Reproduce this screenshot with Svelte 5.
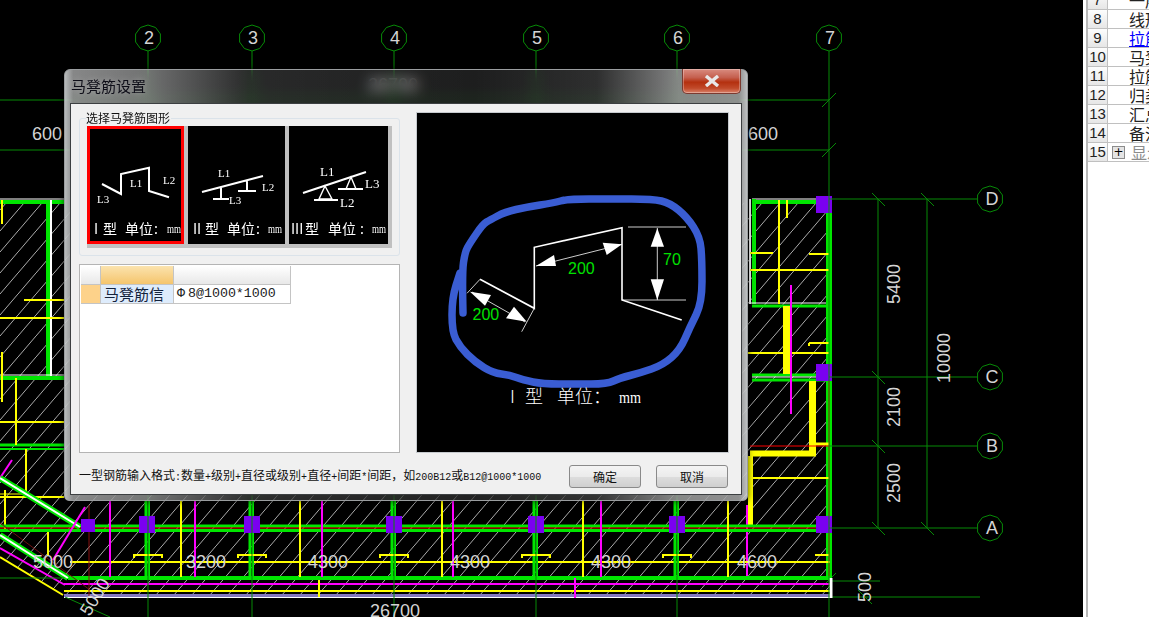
<script lang="ts">
    const G = "#00e600";
    const Y = "#ffff00";
    const M = "#ff00ff";
    const W = "#ffffff";
    const R = "#ff0000";
    const AXIS = "#078a07";

    // x1, y1, x2, y2, colour, width
    const walls: [number, number, number, number, string, number][] = [
        // top wall, left and right rooms
        [0, 199, 64, 199, W, 1], [0, 202, 64, 202, G, 4],
        [752, 199, 832, 199, W, 1], [752, 202, 830, 202, G, 4],
        [754, 199, 754, 304, G, 4], [750, 199, 750, 304, W, 2],
        [48, 200, 48, 376, G, 4], [51, 200, 51, 376, W, 2],
        [0, 375, 64, 375, W, 1], [0, 378, 64, 378, G, 4],
        [0, 445, 64, 445, G, 3], [0, 449, 64, 449, G, 2],
        [750, 303, 829, 303, W, 1], [752, 306, 829, 306, G, 3],
        [752, 375, 826, 375, G, 3], [752, 377, 829, 377, W, 1], [752, 380, 826, 380, G, 3],
        [827.5, 200, 827.5, 578, G, 3], [830.5, 200, 830.5, 578, G, 3], [829, 376, 829, 578, R, 1],
        // yellow inside the rooms
        [779, 200, 779, 304, Y, 2], [750, 270, 829, 270, Y, 2],
        [750, 253, 773, 253, Y, 2], [809, 254, 829, 254, Y, 2],
        [787, 200, 787, 218, Y, 2], [748, 353, 829, 353, Y, 2],
        [809, 343, 829, 343, Y, 2], [809, 343, 809, 346, Y, 2],
        [786.5, 306, 786.5, 374, Y, 7], [812.5, 381, 812.5, 451, Y, 7],
        [750, 453.5, 816, 453.5, Y, 6], [750.5, 456, 750.5, 525, Y, 5],
        [809, 444, 829, 444, Y, 3], [753, 478, 829, 478, Y, 2],
        [791, 285, 791, 414, M, 2], [750, 446, 829, 446, R, 1],
        [815, 555, 829, 555, Y, 2], [747, 505, 747, 577, M, 2],
        // left side
        [2, 200, 2, 224, Y, 2], [2, 352, 2, 402, Y, 2],
        [0, 318, 64, 318, Y, 2], [24, 300, 64, 300, Y, 2],
        [0, 422, 64, 422, Y, 2], [16, 378, 16, 445, Y, 2],
        [26, 449, 26, 495, Y, 2], [0, 494, 26, 494, Y, 1], [0, 497, 64, 497, Y, 2],
        [5, 490, 5, 530, Y, 2], [48, 530, 48, 556, Y, 2],
        [0, 478, 12, 460, M, 2],
        // bottom band
        [0, 526, 830, 526, G, 3], [0, 530.5, 830, 530.5, G, 3], [0, 528, 830, 528, R, 1],
        [68, 578, 830, 578, G, 4], [70, 562, 830, 562, Y, 2],
        [64, 584, 832, 584, M, 2], [64, 591, 832, 591, Y, 2],
        [64, 595.5, 832, 595.5, "#8478c0", 3], [64, 597.5, 832, 597.5, W, 1],
        [319, 580, 319, 597, Y, 2], [575, 578, 575, 598, M, 2],
        [831, 578, 831, 598, W, 3],
        // diagonal wing
        [0, 478, 80, 527, G, 6], [0, 478, 80, 527, W, 2],
        [0, 535, 68, 578, G, 6], [0, 535, 68, 578, W, 2],
        [0, 548, 65, 585, M, 2], [0, 557, 63, 595, Y, 2],
        [85, 507, 53, 560, M, 2], [89, 505, 89, 597, "#8a1010", 1],
        [0, 523, 90, 590, "#701010", 1], [65, 597, 110, 617, AXIS, 1], [0, 578, 64, 578, AXIS, 1]
    ];

    const bayXs = [148, 252, 394, 536, 677];
    const yellowXs = [181, 300, 442, 583, 728];
    const magentaXs = [110, 195, 322, 453, 601];

    const vAxes = [
        { x: 148, label: "2" }, { x: 252, label: "3" }, { x: 394, label: "4" },
        { x: 536, label: "5" }, { x: 677, label: "6" }, { x: 829, label: "7" }
    ];
    const hAxes = [
        { y: 199, label: "D" }, { y: 377, label: "C" }, { y: 446, label: "B" }, { y: 528, label: "A" }
    ];

    const columns = [
        [816, 196], [816, 364], [816, 516], [139, 516], [244, 516], [386, 516], [528, 516], [669, 516]
    ];

    const flatDims = [
        { x: 206, y: 568, t: "3200" }, { x: 328, y: 568, t: "4300" }, { x: 470, y: 568, t: "4300" },
        { x: 611, y: 568, t: "4300" }, { x: 757, y: 568, t: "4600" }, { x: 53, y: 568, t: "5000" },
        { x: 47, y: 140, t: "600" }, { x: 763, y: 140, t: "600" }, { x: 395, y: 617, t: "26700" },
        { x: 393, y: 91, t: "26700" }
    ];
    const sideDims = [
        { x: 900, y: 284, t: "5400" }, { x: 900, y: 407, t: "2100" }, { x: 900, y: 483, t: "2500" },
        { x: 950, y: 358, t: "10000" }, { x: 871, y: 587, t: "500" }
    ];

    function bubble(cx: number, cy: number) {
        const pts = [];
        for (let i = 0; i < 10; i++) {
            const a = (Math.PI / 5) * i;
            pts.push(`${(cx + 13 * Math.sin(a)).toFixed(1)},${(cy - 13 * Math.cos(a)).toFixed(1)}`);
        }
        return pts.join(" ");
    }

    const blobPts = [
        [463, 313], [462, 273], [465, 252], [470, 243], [483, 224], [490, 220], [505, 212], [527, 207], [553, 203],
        [568, 199], [610, 199], [653, 199], [670, 203], [687, 217], [700, 237], [702, 260], [702, 303],
        [690, 327], [680, 350], [663, 365], [640, 373], [620, 378], [607, 384], [575, 384], [543, 384],
        [523, 380], [510, 375], [493, 373], [475, 362], [460, 347], [452, 332], [452, 298], [460, 273]
    ];

    // rounded pen stroke: curve through the midpoints of the sampled points
    function penPath(pts: number[][]) {
        let d = `M${pts[0][0]} ${pts[0][1]}`;
        for (let i = 1; i < pts.length - 1; i++) {
            const mx = (pts[i][0] + pts[i + 1][0]) / 2;
            const my = (pts[i][1] + pts[i + 1][1]) / 2;
            d += ` Q${pts[i][0]} ${pts[i][1]} ${mx} ${my}`;
        }
        const last = pts[pts.length - 1];
        return `${d} L${last[0]} ${last[1]}`;
    }
    const blob = penPath(blobPts);

    const footer = "一型钢筋输入格式:数量+级别+直径或级别+直径+间距*间距，如200B12或B12@1000*1000";
    const footerParts = footer.split(/([\x00-\x7f]+)/).filter(Boolean);
    const isAscii = (s: string) => /^[\x00-\x7f]+$/.test(s);

    const sideRows = [
        { n: 7, t: "一层" }, { n: 8, t: "线形" }, { n: 9, t: "拉筋", link: true }, { n: 10, t: "马凳筋" },
        { n: 11, t: "拉筋" }, { n: 12, t: "归类" }, { n: 13, t: "汇总" }, { n: 14, t: "备注" },
        { n: 15, t: "显示", tree: true }
    ];
</script>

<div class="screen">
    <svg class="cad" viewBox="0 0 1083 617" width="1083" height="617">
        <defs>
            <pattern id="hatch" patternUnits="userSpaceOnUse" width="18" height="21">
                <path d="M-1 22.2 L19 -1.2" stroke="#bdbdbd" stroke-width="0.9" />
            </pattern>
        </defs>
        <polygon points="0,203 832,203 832,597 65,597 0,555" fill="url(#hatch)" />

        <line x1="0" y1="100" x2="829" y2="100" stroke={AXIS} />
        <line x1="0" y1="150" x2="829" y2="150" stroke={AXIS} />
        <line x1="878" y1="199" x2="878" y2="528" stroke={AXIS} />
        <line x1="927" y1="199" x2="927" y2="528" stroke={AXIS} />
        <line x1="829" y1="581" x2="880" y2="581" stroke={AXIS} />
        <line x1="829" y1="597" x2="980" y2="597" stroke={AXIS} />
        <path
            d="M822 107 L836 93 M822 157 L836 143 M872 193 L885 206 M921 193 L934 206 M872 371 L885 384 M872 440 L885 453 M872 522 L885 535 M921 522 L934 535 M822 587 L836 573 M858 590 L872 604"
            stroke={AXIS}
            fill="none"
        />

        {#each walls as [x1, y1, x2, y2, c, w]}
            <line {x1} {y1} {x2} {y2} stroke={c} stroke-width={w} />
        {/each}

        {#each bayXs as x}
            <line x1={x - 2} y1="501" x2={x - 2} y2="577" stroke={G} stroke-width="3" />
            <line x1={x + 1} y1="501" x2={x + 1} y2="577" stroke={G} stroke-width="2" />
            <path d="M{x - 14} 558 V555 H{x + 14} V558" stroke={Y} stroke-width="2" fill="none" />
        {/each}
        {#each yellowXs as x}
            <line x1={x} y1="501" x2={x} y2="577" stroke={Y} stroke-width="2" />
        {/each}
        {#each magentaXs as x}
            <line x1={x} y1="501" x2={x} y2="577" stroke={M} stroke-width="2" />
        {/each}

        {#each columns as [x, y]}
            <rect {x} {y} width="16" height="17" fill="#7a00f0" />
        {/each}
        <rect x="81" y="519" width="14" height="13" fill="#7a00f0" />

        {#each vAxes as a}
            <line x1={a.x} y1="51" x2={a.x} y2="617" stroke={AXIS} />
            <polygon points={bubble(a.x, 38)} fill="#000" stroke={AXIS} />
            <text class="dim" x={a.x + 1} y="44" text-anchor="middle">{a.label}</text>
        {/each}
        {#each hAxes as a}
            <line x1="829" y1={a.y} x2="977" y2={a.y} stroke={AXIS} />
            <polygon points={bubble(990, a.y)} fill="#000" stroke={AXIS} />
            <text class="dim" x="992" y={a.y + 6} text-anchor="middle">{a.label}</text>
        {/each}

        {#each flatDims as d}
            <text class="dim" x={d.x} y={d.y} text-anchor="middle">{d.t}</text>
        {/each}
        {#each sideDims as d}
            <text class="dim" text-anchor="middle" transform="translate({d.x} {d.y}) rotate(-90)">{d.t}</text>
        {/each}
        <text class="dim" text-anchor="middle" transform="translate(100 600) rotate(-58)">5000</text>
    </svg>

    <aside class="side">
        <div class="side-table">
            {#each sideRows as row}
                <div class="side-row">
                    <span class="side-num">{row.n}</span>
                    <span class="side-cell" class:link={row.link} class:muted={row.tree}>
                        {#if row.tree}<i class="plus">+</i>{/if}{row.t}
                    </span>
                </div>
            {/each}
        </div>
    </aside>

    <section class="dialog">
        <h1 class="title">马凳筋设置</h1>
        <button class="close" aria-label="关闭">
            <svg viewBox="0 0 16 12" width="16" height="12">
                <path d="M2 1 L14 11 M14 1 L2 11" stroke="#e8e8e8" stroke-width="3.4" fill="none" />
            </svg>
        </button>

        <div class="client">
            <div class="main">
                <div class="left">
                    <fieldset class="group">
                        <span class="group-label">选择马凳筋图形</span>
                        <div class="strip">
                            <svg class="thumb selected" viewBox="87 126 97 118" width="97" height="118">
                                <path class="rebar" d="M102 184 L121 194 V174 L149 167.7 V191 L169 197.3" />
                                <text class="tag" x="130" y="187">L1</text>
                                <text class="tag" x="163" y="184">L2</text>
                                <text class="tag" x="97" y="203">L3</text>
                                <text class="cap" x="94" y="234">I</text>
                                <text class="cap" x="103" y="234">型</text>
                                <text class="cap" x="125" y="234">单位</text>
                                <text class="cap" x="154" y="234">:</text>
                                <text class="cap-mm" x="167" y="233" textLength="14" lengthAdjust="spacingAndGlyphs">mm</text>
                            </svg>
                            <svg class="thumb" viewBox="188 126 97 118" width="97" height="118">
                                <path class="rebar" d="M202 192 L263 176 M221 187 V199 M213 199 H229 M247 180 V191 M238 191 H256" />
                                <text class="tag" x="218" y="177">L1</text>
                                <text class="tag" x="262" y="191">L2</text>
                                <text class="tag" x="229" y="204">L3</text>
                                <text class="cap" x="193" y="234">II</text>
                                <text class="cap" x="205" y="234">型</text>
                                <text class="cap" x="227" y="234">单位</text>
                                <text class="cap" x="256" y="234">:</text>
                                <text class="cap-mm" x="268" y="233" textLength="14" lengthAdjust="spacingAndGlyphs">mm</text>
                            </svg>
                            <svg class="thumb" viewBox="289 126 99 118" width="99" height="118">
                                <path class="rebar" d="M303 193 L366 172 M314 200 H338 M338 189 H363" />
                                <path class="rebar thin" d="M325 186 L319 199 H332 Z M351 177 L346 189 H356 Z" />
                                <text class="tag big" x="320" y="176">L1</text>
                                <text class="tag big" x="340" y="207">L2</text>
                                <text class="tag big" x="365" y="188">L3</text>
                                <text class="cap" x="291" y="234">III</text>
                                <text class="cap" x="305" y="234">型</text>
                                <text class="cap" x="328" y="234">单位</text>
                                <text class="cap" x="360" y="234">:</text>
                                <text class="cap-mm" x="372" y="233" textLength="14" lengthAdjust="spacingAndGlyphs">mm</text>
                            </svg>
                        </div>
                    </fieldset>

                    <div class="sheet">
                        <div class="sheet-grid">
                            <span class="head"></span>
                            <span class="head active"></span>
                            <span class="head"></span>
                            <span class="row-head"></span>
                            <span class="cell name">马凳筋信</span>
                            <span class="cell value"><b class="bar-mark">Φ</b>8@1000*1000</span>
                        </div>
                    </div>
                </div>

                <svg class="preview" viewBox="417 113 311 339" width="311" height="339">
                    <path class="big-line" d="M480 279.3 L534.3 308.3 V247.3 L622 227.7 V300 L681.7 320" />
                    <path
                        class="hair"
                        d="M467 293.3 L480 279.3 M534.3 308.3 L521.7 331.7 M472 292 L525 322 M536 266 L622 244.3 M657.3 228 V300 M628 227 H686 M622 300 H686"
                    />
                    <polygon class="head-w" points="470,291.7 491,295 485,305.7" />
                    <polygon class="head-w" points="526.7,321.7 514,306.7 506,318.3" />
                    <polygon class="head-w" points="536,266 554,255 556,266" />
                    <polygon class="head-w" points="622,244.3 602.7,242.7 606.7,255" />
                    <polygon class="head-w" points="657.3,228.3 650.7,246.7 664,246.7" />
                    <polygon class="head-w" points="657.3,300 650.7,279.3 664,279.3" />
                    <text class="green" x="472.5" y="320">200</text>
                    <text class="green" x="568" y="274">200</text>
                    <text class="green" x="663" y="265">70</text>
                    <path class="marker" d={blob} />
                    <text class="pre-cap" x="510" y="403">I</text>
                    <text class="pre-cap" x="525" y="403">型</text>
                    <text class="pre-cap" x="557" y="403">单位：</text>
                    <text class="pre-mm" x="619" y="403" textLength="22" lengthAdjust="spacingAndGlyphs">mm</text>
                </svg>
            </div>

            <footer class="foot">
                <p class="hint">
                    {#each footerParts as part}<span class:ascii={isAscii(part)}>{part}</span>{/each}
                </p>
                <button class="btn">确定</button>
                <button class="btn">取消</button>
            </footer>
        </div>
    </section>
</div>

<style>
    :global(body) {
        background: #000;
    }

    .screen {
        position: relative;
        display: flex;
        width: 1149px;
        height: 617px;
        overflow: hidden;
        background: #000;
        font-family: "Noto Sans CJK SC", sans-serif;
    }

    .cad {
        display: block;
        flex: none;
    }

    .dim {
        font-family: "Liberation Sans", sans-serif;
        font-size: 18px;
        fill: #d4d4d4;
    }

    .side {
        flex: 1;
        min-width: 0;
        background: #fff;
        padding-left: 3px;
        overflow: hidden;
    }

    .side-table {
        border-left: 2px solid #b8b8b8;
        height: calc(100% + 9px);
        margin-top: -9px;
        white-space: nowrap;
    }

    .side-row {
        display: flex;
        height: 19px;
        box-sizing: border-box;
        border-bottom: 1px solid #c0c0c0;
        align-items: center;
        overflow: hidden;
    }

    .side-num {
        flex: none;
        width: 20px;
        height: 18px;
        border-right: 1px solid #c0c0c0;
        box-sizing: border-box;
        background: linear-gradient(#fdfdfd, #e6e6e6);
        font-family: "Liberation Sans", sans-serif;
        font-size: 15px;
        line-height: 18px;
        text-align: center;
        color: #222;
    }

    .side-cell {
        display: flex;
        align-items: center;
        flex: none;
        margin-left: 21px;
        font-size: 16px;
        line-height: 18px;
        color: #222;
    }

    .side-row:last-child .side-cell {
        margin-left: 4px;
    }

    .side-cell.link {
        color: #0000ff;
        text-decoration: underline;
    }

    .side-cell.muted {
        color: #8c8c8c;
    }

    .plus {
        width: 11px;
        height: 11px;
        margin-right: 6px;
        border: 1px solid #8c8c8c;
        background: #e4e4e4;
        font: 12px/10px "DejaVu Sans", sans-serif;
        text-align: center;
        color: #000;
    }

    .dialog {
        position: absolute;
        left: 64px;
        top: 69px;
        width: 684px;
        height: 432px;
        box-sizing: border-box;
        padding: 33px 5px 5px;
        border-radius: 6px 6px 5px 5px;
        border: 1px solid #9a9d9f;
        backdrop-filter: blur(7px);
        background:
            linear-gradient(
                90deg,
                rgba(225, 230, 232, 0.58) 0,
                rgba(190, 195, 197, 0.14) 1.2%,
                rgba(160, 165, 167, 0.1) 98.8%,
                rgba(225, 230, 232, 0.58) 100%
            ),
            linear-gradient(
                90deg,
                rgba(255, 255, 255, 0.5) 0,
                rgba(255, 255, 255, 0.4) 12%,
                rgba(255, 255, 255, 0.08) 27%,
                rgba(255, 255, 255, 0.04) 60%,
                rgba(255, 255, 255, 0.12) 78%,
                rgba(255, 255, 255, 0.5) 90%,
                rgba(255, 255, 255, 0.55) 100%
            );
        box-shadow: 0 0 6px rgba(0, 0, 0, 0.7);
    }

    .title {
        position: absolute;
        left: 6px;
        top: 6px;
        margin: 0;
        font-size: 15px;
        font-weight: 400;
        line-height: 20px;
        color: #0e0e18;
        text-shadow: 0 0 6px rgba(255, 255, 255, 0.35);
    }

    .close {
        position: absolute;
        top: -1px;
        right: 6px;
        width: 59px;
        height: 25px;
        padding: 0;
        display: flex;
        align-items: center;
        justify-content: center;
        border: 1px solid #7b3a30;
        border-top: 0;
        border-radius: 0 0 5px 5px;
        background: linear-gradient(#d98c80 0, #c5604f 35%, #b4300f 55%, #c14a2a 80%, #d9816a 100%);
        box-shadow: inset 0 0 0 1px rgba(255, 255, 255, 0.3);
    }

    .client {
        height: 100%;
        box-sizing: border-box;
        border: 1px solid #3c3f41;
        background: #f0f0f0;
        display: flex;
        flex-direction: column;
    }

    .main {
        display: flex;
        gap: 17px;
        padding: 9px 0 0 8px;
    }

    .left {
        flex: none;
        width: 321px;
        padding-top: 5px;
        display: flex;
        flex-direction: column;
        gap: 8px;
    }

    .group {
        position: relative;
        margin: 0;
        padding: 7px 7px 8px 7px;
        height: 138px;
        box-sizing: border-box;
        border: 1px solid #dbe3ea;
        border-radius: 3px;
        min-width: 0;
    }

    .group-label {
        position: absolute;
        left: 6px;
        top: -8px;
        padding-right: 1px;
        background: #f0f0f0;
        font-size: 12px;
        line-height: 14px;
        color: #111;
    }

    .strip {
        display: flex;
        gap: 4px;
        width: 305px;
        height: 122px;
        box-sizing: border-box;
        padding-bottom: 4px;
        background: #c0c0c0;
    }

    .thumb {
        display: block;
        flex: none;
        background: #000;
    }

    .thumb.selected {
        outline: 3px solid #ff0000;
        outline-offset: -3px;
    }

    .rebar {
        stroke: #fff;
        stroke-width: 2;
        fill: none;
    }

    .rebar.thin {
        stroke-width: 1.4;
    }

    .tag {
        font-family: "Liberation Serif", serif;
        font-size: 11px;
        fill: #fff;
    }

    .tag.big {
        font-size: 13px;
    }

    .cap {
        font-family: "Noto Sans CJK SC", sans-serif;
        font-size: 14px;
        font-weight: 400;
        fill: #fff;
    }

    .cap-mm {
        font-family: "Liberation Serif", serif;
        font-size: 12px;
        fill: #fff;
    }

    .sheet {
        height: 189px;
        box-sizing: border-box;
        padding: 1px;
        border: 1px solid #b4b4b4;
        background: #fff;
    }

    .sheet-grid {
        display: grid;
        grid-template-columns: 20px 73px 117px;
        grid-template-rows: 19px 19px;
        width: 210px;
    }

    .sheet-grid > span {
        box-sizing: border-box;
        border-right: 1px solid #c4c4c4;
        border-bottom: 1px solid #c4c4c4;
    }

    .head {
        background: linear-gradient(#ffffff, #e8e8e8);
    }

    .head.active {
        background: linear-gradient(#fbe3ae, #f5c56d);
    }

    .row-head {
        background: #fdd28a;
    }

    .cell {
        font-size: 15px;
        line-height: 18px;
        white-space: nowrap;
        overflow: hidden;
    }

    .name {
        padding-left: 3px;
        background: #deecfc;
        color: #14233c;
    }

    .value {
        padding-left: 3px;
        font-family: "Liberation Mono", monospace;
        font-size: 13.3px;
        color: #222;
        background: #fff;
    }

    .bar-mark {
        font-weight: 400;
        margin-right: 3px;
    }

    .preview {
        display: block;
        flex: none;
        background: #000;
        outline: 1px solid #c6cace;
    }

    .big-line {
        stroke: #fff;
        stroke-width: 1.6;
        fill: none;
    }

    .hair {
        stroke: #fff;
        stroke-width: 0.8;
        fill: none;
    }

    .head-w {
        fill: #fff;
    }

    .green {
        font-family: "Liberation Sans", sans-serif;
        font-size: 16px;
        fill: #00e000;
    }

    .marker {
        stroke: #3a5dd3;
        stroke-width: 7.5;
        stroke-linecap: round;
        stroke-linejoin: round;
        fill: none;
    }

    .pre-cap {
        font-size: 18px;
        font-weight: 300;
        fill: #fff;
    }

    .pre-mm {
        font-family: "Liberation Serif", serif;
        font-size: 16px;
        fill: #fff;
    }

    .foot {
        flex: 1;
        display: flex;
        align-items: center;
        gap: 15px;
        padding: 5px 13px 0 8px;
    }

    .hint {
        flex: 1;
        margin: 0;
        font-size: 12px;
        line-height: 16px;
        color: #111;
        white-space: nowrap;
    }

    .ascii {
        font-family: "Liberation Mono", monospace;
        font-size: 10px;
    }

    .btn {
        flex: none;
        width: 72px;
        height: 23px;
        padding: 0;
        border: 1px solid #8a8a8a;
        border-radius: 3px;
        background: linear-gradient(#f4f4f4 0, #ebebeb 50%, #dddddd 52%, #cfcfcf 100%);
        font-family: "Noto Sans CJK SC", sans-serif;
        font-size: 12px;
        color: #111;
    }
</style>
